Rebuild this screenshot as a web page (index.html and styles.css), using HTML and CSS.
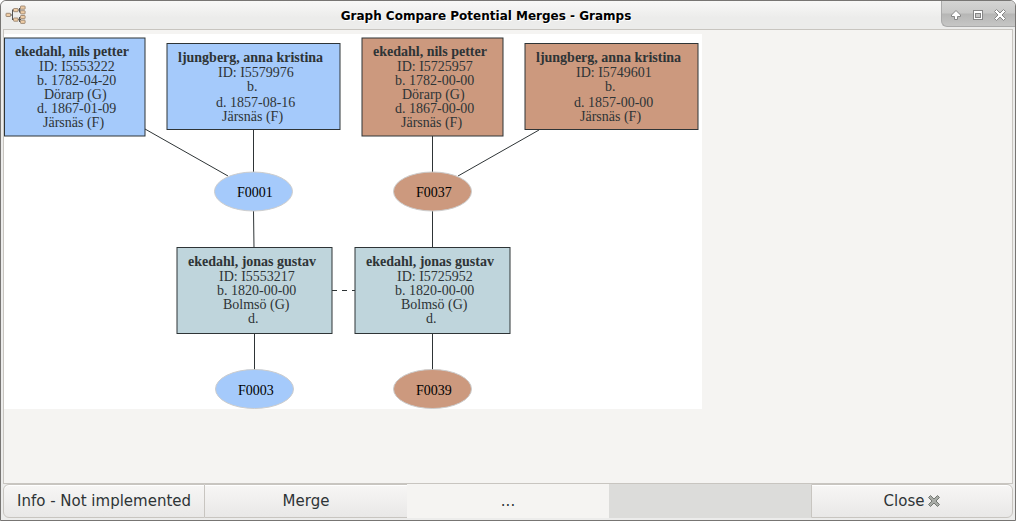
FILE: index.html
```html
<!DOCTYPE html>
<html lang="en">
<head>
<meta charset="utf-8">
<title>Graph Compare Potential Merges - Gramps</title>
<link rel="stylesheet" href="styles.css">
</head>
<body>
<div class="window">
  <header class="titlebar">
    <svg class="app-icon" width="22" height="20" viewBox="0 0 22 20" aria-hidden="true">
      <path class="tree-line" d="M5 10H8M7.500 5V15M7 5H9M7 14.500H9M13 5H16M13 14.500H16M14.500 3V7.500M14.500 12V17"/>
      <g class="tree-node">
        <rect x="1" y="8.300" width="4.600" height="3.200" rx=".6"/>
        <rect x="8.500" y="3.500" width="4.600" height="3.200" rx=".6"/><rect x="8.500" y="13" width="4.600" height="3.200" rx=".6"/>
        <rect x="15.500" y="1" width="4.600" height="3.200" rx=".6"/><rect x="15.500" y="5.700" width="4.600" height="3.200" rx=".6"/>
        <rect x="15.500" y="10.500" width="4.600" height="3.200" rx=".6"/><rect x="15.500" y="15.200" width="4.600" height="3.200" rx=".6"/>
      </g>
    </svg>
    <h1 class="title">Graph Compare Potential Merges - Gramps</h1>
    <div class="controls">
      <button class="control" type="button" aria-label="Shade">
        <svg width="12" height="12" viewBox="0 0 12 12"><path class="glyph" d="M6 1.500L10.500 6V7.500H7.500V10.500H4.500V7.500H1.500V6Z"/></svg>
      </button>
      <button class="control" type="button" aria-label="Maximize">
        <svg width="12" height="12" viewBox="0 0 12 12"><rect class="glyph" x="1.500" y="1.500" width="9" height="9"/><rect class="glyph-hole" x="3.500" y="4.500" width="5" height="4"/></svg>
      </button>
      <button class="control" type="button" aria-label="Close window">
        <svg width="12" height="12" viewBox="0 0 12 12"><path class="glyph" d="M2.500 .5L6 4L9.500 .5L11.500 2.500L8 6L11.500 9.500L9.500 11.500L6 8L2.500 11.500L.5 9.500L4 6L.5 2.500Z"/></svg>
      </button>
    </div>
  </header>

  <main class="view">
    <svg class="graph" width="698" height="375" viewBox="4 34 698 375" role="img" aria-label="Family graph comparison">
      <g class="edge">
        <path d="M145 129L228 176"/><path d="M253.500 130V172"/>
        <path d="M432.500 136V172"/><path d="M539 130L458 176"/>
        <path d="M253.500 211L254 248"/><path d="M432.500 211V248"/>
        <path d="M254.500 334V370"/><path d="M432.500 334V370"/>
        <path class="dashed" d="M332 290.500H355"/>
      </g>
      <g class="person blue">
        <rect x="4.500" y="38" width="140.500" height="98"/>
        <text class="name" x="15" y="56">ekedahl, nils petter</text>
        <text x="39" y="71">ID: I5553222</text>
        <text x="37" y="85">b. 1782-04-20</text>
        <text x="44" y="99">Dörarp (G)</text>
        <text x="37" y="113">d. 1867-01-09</text>
        <text x="43" y="127">Järsnäs (F)</text>
      </g>
      <g class="person blue">
        <rect x="167" y="43.500" width="173" height="86"/>
        <text class="name" x="178" y="62">ljungberg, anna kristina</text>
        <text x="218" y="77">ID: I5579976</text>
        <text x="247" y="91">b.</text>
        <text x="216" y="107">d. 1857-08-16</text>
        <text x="222" y="121">Järsnäs (F)</text>
      </g>
      <g class="person brown">
        <rect x="362" y="38" width="141" height="98"/>
        <text class="name" x="373" y="56">ekedahl, nils petter</text>
        <text x="397" y="71">ID: I5725957</text>
        <text x="395" y="85">b. 1782-00-00</text>
        <text x="402" y="99">Dörarp (G)</text>
        <text x="395" y="113">d. 1867-00-00</text>
        <text x="401" y="127">Järsnäs (F)</text>
      </g>
      <g class="person brown">
        <rect x="525" y="43.500" width="173" height="86"/>
        <text class="name" x="536" y="62">ljungberg, anna kristina</text>
        <text x="576" y="77">ID: I5749601</text>
        <text x="605" y="91">b.</text>
        <text x="574" y="107">d. 1857-00-00</text>
        <text x="580" y="121">Järsnäs (F)</text>
      </g>
      <g class="person teal">
        <rect x="177" y="247.500" width="155" height="86"/>
        <text class="name" x="188" y="266">ekedahl, jonas gustav</text>
        <text x="219" y="281">ID: I5553217</text>
        <text x="217" y="295">b. 1820-00-00</text>
        <text x="223" y="309">Bolmsö (G)</text>
        <text x="248" y="323">d.</text>
      </g>
      <g class="person teal">
        <rect x="355" y="247.500" width="155" height="86"/>
        <text class="name" x="366" y="266">ekedahl, jonas gustav</text>
        <text x="397" y="281">ID: I5725952</text>
        <text x="395" y="295">b. 1820-00-00</text>
        <text x="401" y="309">Bolmsö (G)</text>
        <text x="426" y="323">d.</text>
      </g>
      <g class="family blue"><ellipse cx="253.500" cy="191.500" rx="39" ry="19.500"/><text x="237" y="197">F0001</text></g>
      <g class="family brown"><ellipse cx="432.500" cy="191.500" rx="39" ry="19.500"/><text x="416" y="197">F0037</text></g>
      <g class="family blue"><ellipse cx="254.500" cy="389" rx="39" ry="19.500"/><text x="238" y="395">F0003</text></g>
      <g class="family brown"><ellipse cx="432.500" cy="389" rx="39" ry="19.500"/><text x="416" y="395">F0039</text></g>
    </svg>
  </main>

  <footer class="actions">
    <button class="action first" type="button">Info - Not implemented</button>
    <button class="action" type="button">Merge</button>
    <button class="action flat" type="button">...</button>
    <div class="spacer"></div>
    <button class="action last" type="button">Close
      <svg width="12" height="12" viewBox="0 0 12 12" aria-hidden="true"><path class="close-glyph" d="M2.500 .5L6 4L9.500 .5L11.500 2.500L8 6L11.500 9.500L9.500 11.500L6 8L2.500 11.500L.5 9.500L4 6L.5 2.500Z"/></svg>
    </button>
  </footer>
</div>
</body>
</html>
```
FILE: styles.css
```css
* { box-sizing: border-box; }

body {
  margin: 0;
  background: #fff;
  font-family: "DejaVu Sans", sans-serif;
  color: #2e3436;
}

.window {
  display: flex;
  flex-direction: column;
  height: 100vh;
  padding: 0 2px 2px;
  border: 1px solid #777573;
  border-radius: 6px 6px 0 0;
  background: #ececeb;
  overflow: hidden;
}

.titlebar {
  display: grid;
  grid-template-columns: 76px 1fr 76px;
  flex: none;
  height: 28px;
  margin: 0 -2px;
  border-radius: 5px 5px 0 0;
  background: linear-gradient(#f8f8f7, #ececeb 60%);
}

.app-icon { margin: 4px 0 0 4px; }
.tree-line { fill: none; stroke: #555; stroke-width: 1; }
.tree-node { fill: #efcda6; stroke: #8f7a66; stroke-width: .8; }

.title {
  margin: 0;
  padding-right: 44px;
  font-size: 12px;
  line-height: 30px;
  text-align: center;
  color: #000;
  text-shadow: 1px 1px 0 #fff;
}

.controls {
  display: flex;
  align-items: center;
  justify-content: flex-end;
  height: 26px;
  gap: 10px;
  padding: 2px 9px 0 0;
  margin-left: 2px;
  border-left: 1px solid #aaa;
  border-bottom: 1px solid #aaa;
  border-bottom-left-radius: 6px;
  background: linear-gradient(#d4d4d3, #c8c8c7 48%, #b6b6b5 52%, #c6c6c5);
}

.control {
  display: flex;
  padding: 0;
  border: 0;
  background: none;
}

.glyph { fill: #fff; stroke: #868686; }
.glyph-hole { fill: #c4c4c3; stroke: #868686; }

.view {
  flex: 1;
  min-height: 0;
  padding-top: 4px;
  border: 1px solid #c8c5c0;
  background: #f5f4f2;
  overflow: hidden;
}

.graph { display: block; background: #fff; }
.graph text { font-family: "Liberation Serif", serif; font-size: 14px; fill: #2e3436; }
.graph .name { font-weight: bold; }
.graph .family text { fill: #000; }
.edge { fill: none; stroke: #2e3436; }
.dashed { stroke-dasharray: 5 5; }
.person rect { stroke: #2e3436; }
.family ellipse { stroke: #ccc; }
.blue rect, .blue ellipse { fill: #a5cafb; }
.brown rect, .brown ellipse { fill: #cc997e; }
.teal rect { fill: #bfd5dc; }

.actions {
  display: grid;
  grid-template-columns: repeat(5, 1fr);
  flex: none;
  height: 34px;
}

.action {
  display: flex;
  align-items: center;
  justify-content: center;
  gap: 4px;
  padding: 0;
  border: 1px solid #c8c5c0;
  border-left-width: 0;
  background: linear-gradient(#f7f6f5, #e9e8e7);
  box-shadow: inset 0 1px #fff;
  font: 15px "DejaVu Sans", sans-serif;
  color: #2e3436;
  white-space: nowrap;
}

.action:nth-child(2) { border-right-width: 0; }
.first { border-left-width: 1px; border-radius: 6px 0 0 6px; }
.last { border-left-width: 1px; border-radius: 0 6px 6px 0; }
.flat { border: 0; background: #f5f4f2; box-shadow: none; }
.spacer { background: #dcdcda; }
.close-glyph { fill: #a8aba6; stroke: #747872; }
```
